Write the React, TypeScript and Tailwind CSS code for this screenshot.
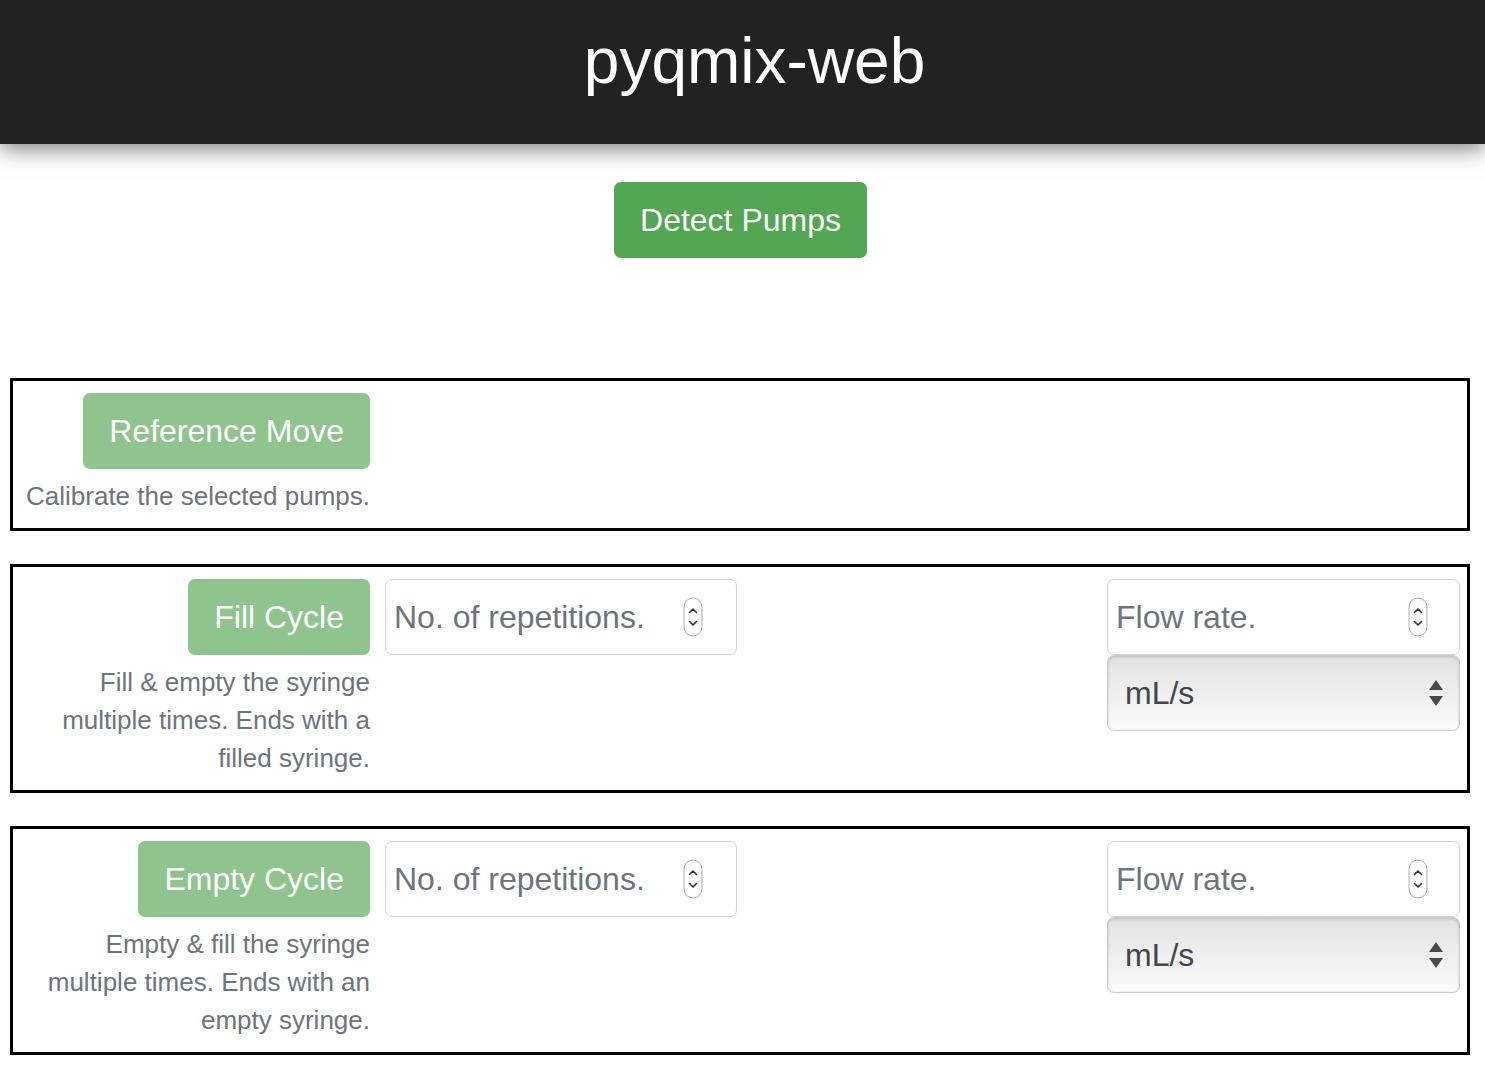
import { useState } from 'react'

function Stepper() {
  return (
    <svg width="20" height="40" viewBox="0 0 20 40" className="shrink-0">
      <rect x="1" y="1" width="18" height="38" rx="9" fill="white" stroke="#a9adb1" strokeWidth="1" />
      <path d="M6.5 15.5 L10 12 L13.5 15.5" fill="none" stroke="#333" strokeWidth="1.6" strokeLinecap="round" strokeLinejoin="round" />
      <path d="M6.5 24.5 L10 28 L13.5 24.5" fill="none" stroke="#333" strokeWidth="1.6" strokeLinecap="round" strokeLinejoin="round" />
    </svg>
  )
}

function NumberField({ placeholder, stepperRight }: { placeholder: string; stepperRight: string }) {
  const [value, setValue] = useState('')
  return (
    <div className={`flex items-center h-[76px] border border-[#ced4da] rounded-[7px] bg-white pl-[8px] ${stepperRight}`}>
      <input
        type="text"
        value={value}
        onChange={(e) => setValue(e.target.value)}
        placeholder={placeholder}
        className="flex-1 min-w-0 bg-transparent outline-none text-[32px] text-[#495057] placeholder:text-[#6c757d]"
      />
      <Stepper />
    </div>
  )
}

function UnitSelect() {
  return (
    <div className="flex items-center justify-between h-[76px] border border-[#c9cdd1] rounded-[7px] bg-gradient-to-b from-[#e2e2e2] via-[#efefef] to-[#fbfbfb] shadow-[inset_0_1px_3px_rgba(0,0,0,0.18)] pl-[17px] pr-[15px]">
      <span className="text-[32px] text-[#40464c]">mL/s</span>
      <svg width="16" height="30" viewBox="0 0 16 30">
        <path d="M8 2 L15 12 L1 12 Z" fill="#4a4a4a" />
        <path d="M1 18 L15 18 L8 28 Z" fill="#4a4a4a" />
      </svg>
    </div>
  )
}

function ActionButton({ label, muted }: { label: string; muted?: boolean }) {
  return (
    <button
      className={`h-[76px] px-[26px] rounded-[7px] text-white text-[32px] ${muted ? 'bg-[#8fc48f]' : 'bg-[#53a653]'}`}
    >
      {label}
    </button>
  )
}

function Panel({ label, text, controls }: { label: string; text: string; controls?: boolean }) {
  return (
    <div className="border-[3px] border-black mb-[33px] pr-[7px] pt-[12px] pb-[13px] flex items-start">
      <div className="w-[357px] flex flex-col items-end shrink-0">
        <ActionButton label={label} muted />
        <p className="mt-[8px] text-right text-[26px] leading-[38px] text-[#6c757d]">{text}</p>
      </div>
      {controls && (
        <>
          <div className="w-[352px] ml-[15px] shrink-0">
            <NumberField placeholder="No. of repetitions." stepperRight="pr-[33px]" />
          </div>
          <div className="flex-1" />
          <div className="w-[353px] shrink-0 flex flex-col">
            <NumberField placeholder="Flow rate." stepperRight="pr-[31px]" />
            <UnitSelect />
          </div>
        </>
      )}
    </div>
  )
}

export default function App() {
  return (
    <div className="min-h-screen bg-white font-['Liberation_Sans',Arial,sans-serif]">
      <header className="h-[144px] bg-[#222222] flex items-center justify-center shadow-[0_4px_22px_rgba(0,0,0,0.55)] relative z-10">
        <h1 className="text-[64px] leading-[1.2] text-white pb-[22px] pl-[24px]">pyqmix-web</h1>
      </header>

      <div className="flex justify-center pt-[38px] pb-[120px]">
        <div className="mr-[4px]">
          <ActionButton label="Detect Pumps" />
        </div>
      </div>

      <div className="ml-[10px] mr-[15px]">
        <Panel label="Reference Move" text="Calibrate the selected pumps." />
        <Panel
          label="Fill Cycle"
          text="Fill & empty the syringe multiple times. Ends with a filled syringe."
          controls
        />
        <Panel
          label="Empty Cycle"
          text="Empty & fill the syringe multiple times. Ends with an empty syringe."
          controls
        />
      </div>
    </div>
  )
}
